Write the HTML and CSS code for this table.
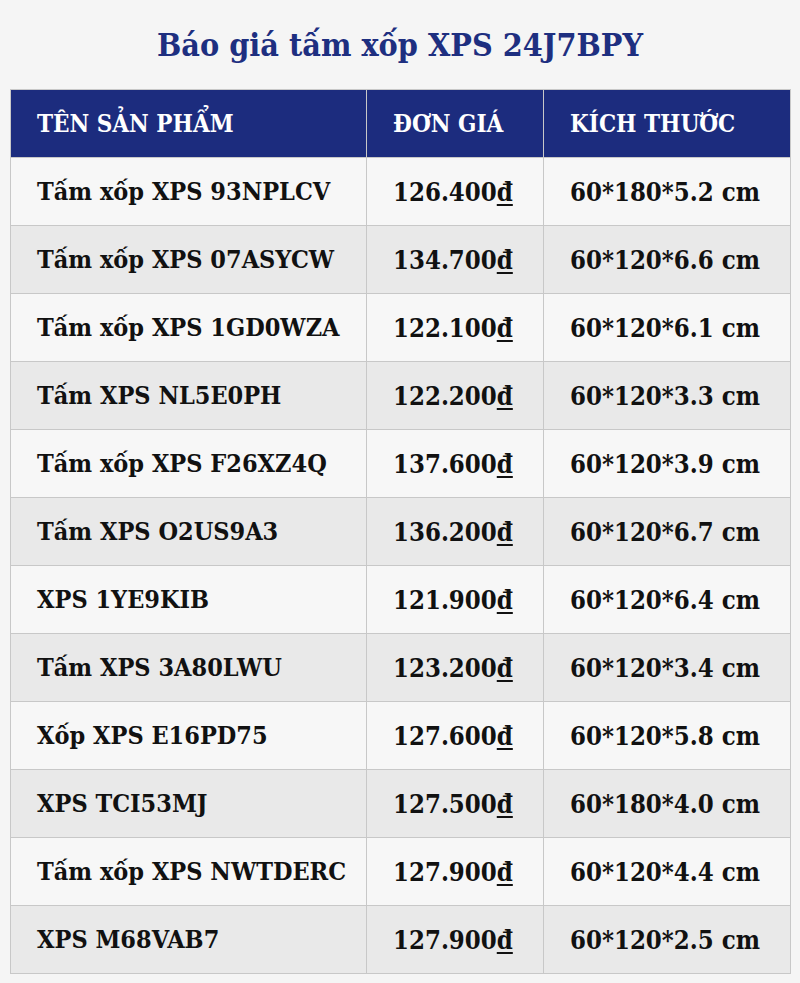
FILE: index.html
```html
<!DOCTYPE html>
<html lang="vi">
<head>
<meta charset="utf-8">
<title>Báo giá tấm xốp XPS 24J7BPY</title>
<link rel="stylesheet" href="styles.css">
</head>
<body>
<div class="page">
  <h1 class="title">Báo giá tấm xốp XPS 24J7BPY</h1>
  <table class="price-table">
    <thead>
      <tr><th class="c-name">TÊN SẢN PHẨM</th><th class="c-price">ĐƠN GIÁ</th><th class="c-size">KÍCH THƯỚC</th></tr>
    </thead>
    <tbody>
      <tr><td>Tấm xốp XPS 93NPLCV</td><td class="num">126.400<u>đ</u></td><td class="num">60*180*5.2 cm</td></tr>
      <tr><td>Tấm xốp XPS 07ASYCW</td><td class="num">134.700<u>đ</u></td><td class="num">60*120*6.6 cm</td></tr>
      <tr><td>Tấm xốp XPS 1GD0WZA</td><td class="num">122.100<u>đ</u></td><td class="num">60*120*6.1 cm</td></tr>
      <tr><td>Tấm XPS NL5E0PH</td><td class="num">122.200<u>đ</u></td><td class="num">60*120*3.3 cm</td></tr>
      <tr><td>Tấm xốp XPS F26XZ4Q</td><td class="num">137.600<u>đ</u></td><td class="num">60*120*3.9 cm</td></tr>
      <tr><td>Tấm XPS O2US9A3</td><td class="num">136.200<u>đ</u></td><td class="num">60*120*6.7 cm</td></tr>
      <tr><td>XPS 1YE9KIB</td><td class="num">121.900<u>đ</u></td><td class="num">60*120*6.4 cm</td></tr>
      <tr><td>Tấm XPS 3A80LWU</td><td class="num">123.200<u>đ</u></td><td class="num">60*120*3.4 cm</td></tr>
      <tr><td>Xốp XPS E16PD75</td><td class="num">127.600<u>đ</u></td><td class="num">60*120*5.8 cm</td></tr>
      <tr><td>XPS TCI53MJ</td><td class="num">127.500<u>đ</u></td><td class="num">60*180*4.0 cm</td></tr>
      <tr><td>Tấm xốp XPS NWTDERC</td><td class="num">127.900<u>đ</u></td><td class="num">60*120*4.4 cm</td></tr>
      <tr><td>XPS M68VAB7</td><td class="num">127.900<u>đ</u></td><td class="num">60*120*2.5 cm</td></tr>
    </tbody>
  </table>
</div>
</body>
</html>
```

FILE: styles.css
```css
html, body {
  margin: 0;
  padding: 0;
  background: #f5f5f5;
}
.page {
  padding: 0 10px;
  font-family: "DejaVu Serif Condensed", "DejaVu Serif", "Liberation Serif", serif;
}
.title {
  margin: 0;
  padding-top: 25px;
  height: 64px;
  box-sizing: border-box;
  text-align: center;
  color: #1e2f80;
  font-size: 32px;
  line-height: 40px;
  font-weight: bold;
}
.price-table {
  width: 780px;
  border-collapse: collapse;
  table-layout: fixed;
  margin-top: 25px;
}
.price-table th,
.price-table td {
  border: 1px solid #c8c8c8;
  height: 68px;
  padding: 0 0 0 26px;
  box-sizing: border-box;
  text-align: left;
  font-size: 25px;
  font-weight: bold;
  color: #111;
  white-space: nowrap;
}
.price-table th {
  background: #1c2c7e;
  color: #fff;
  font-size: 24px;
  font-weight: bold;
}
.c-name { width: 356px; }
.c-price { width: 177px; }
.c-size { width: 247px; }
.price-table tbody tr:nth-child(odd) td { background: #f7f7f7; }
.price-table tbody tr:nth-child(even) td { background: #e9e9e9; }
.price-table td.num { font-size: 25.5px; }
.price-table u {
  text-decoration-thickness: 2px;
  text-underline-offset: 3px;
}
```
